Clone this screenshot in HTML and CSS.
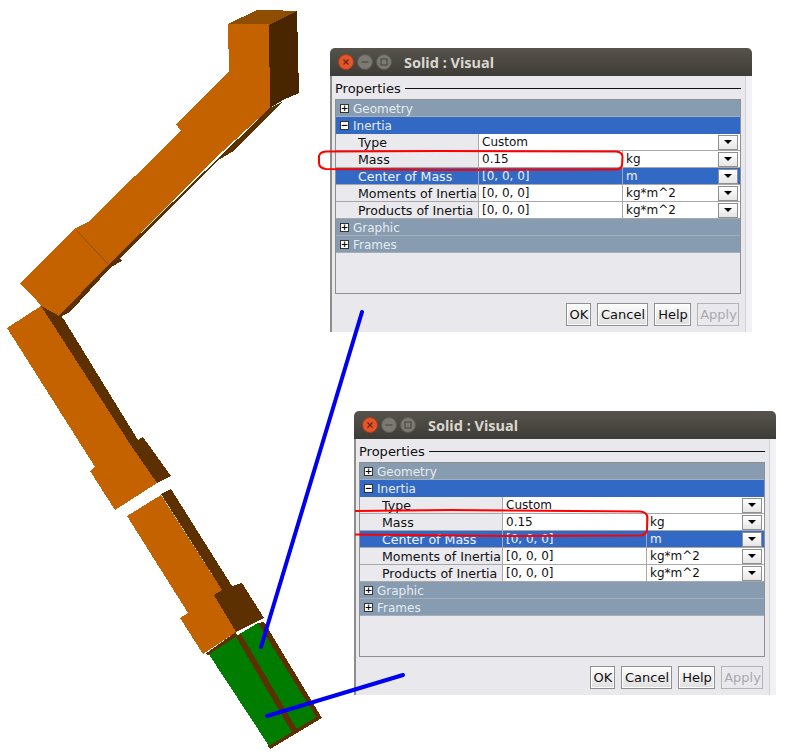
FILE: index.html
```html
<!DOCTYPE html>
<html lang="en">
<head>
  <meta charset="UTF-8">
  <title>Solid : Visual</title>
  <link rel="stylesheet" href="styles.css">
</head>
<body>
<div class="stage">

  <!-- the robot arm -->
  <svg class="canvas" width="789" height="755" viewBox="0 0 789 755">
    <polygon class="top" points="228,24 257,10 268,10 297,11 269,25"/>
    <polygon class="side" points="269,25 297,11 299,93 283,100 270,108"/>
    <polygon class="shade" points="270,108 282,102 232,152 217,161 119,259 123,260 110,268 70,312 55,320 108,265"/>
    <polygon class="shade" points="74,229 88,222 90,224 77,231"/>
    <polygon class="orange" points="228,24 269,24 270,108 211,162 108,265 55,320 20,283 74,229 88,222 181,131 176,124 229,72"/>
    <polyline class="seam" points="77,231 108,264"/>

    <polygon class="shade" points="41,306 63,318 138,440 143,437 171,476 157,483 130,444"/>
    <polygon class="orange" points="7,328 41,306 130,444 157,483 115,510 90,471 95,467"/>

    <polygon class="shade" points="258,623 264,622 322,718 270,749 268,746"/>
    <polygon class="green" points="208,653 258,623 316,717 269,746"/>
    <polygon class="shade" points="236,637 241,634 298,731 293,734"/>

    <polygon class="orange" points="127,516 161,495 222,590 214,595 236,632 203,654 180,618 188,613"/>
    <polygon class="shade" points="161,494 171,489 232,586 242,583 264,618 236,632 214,595 222,590"/>
    <polygon class="shade" points="205,654 236,632 237,636 208,655"/>
  </svg>

  <div class="dialog dialog-a">
    <div class="titlebar">
      <svg class="winbtn" width="16" height="16" viewBox="0 0 16 16"><circle class="btn-close" cx="8" cy="8" r="7.5"/><path class="btn-x" d="M5.5 5.5l5 5M10.5 5.5l-5 5"/></svg>
      <svg class="winbtn" width="16" height="16" viewBox="0 0 16 16"><circle class="btn-off" cx="8" cy="8" r="7.5"/><path class="btn-glyph" d="M4.5 8h7"/></svg>
      <svg class="winbtn" width="16" height="16" viewBox="0 0 16 16"><circle class="btn-off" cx="8" cy="8" r="7.5"/><rect class="btn-glyph" x="5" y="5" width="6" height="6"/></svg>
      <span class="title">Solid : Visual</span>
    </div>
    <div class="body">
      <div class="legend"><span>Properties</span><i></i></div>
      <div class="table">
        <div class="group"><b class="tog">+</b>Geometry</div>
        <div class="group group-open"><b class="tog">−</b>Inertia</div>
        <div class="row"><div class="name">Type</div><div class="val val-wide">Custom</div><div class="drop"><s></s></div></div>
        <div class="row"><div class="name">Mass</div><div class="val">0.15</div><div class="unit">kg</div><div class="drop"><s></s></div></div>
        <div class="row row-sel"><div class="name">Center of Mass</div><div class="val">[0, 0, 0]</div><div class="unit">m</div><div class="drop"><s></s></div></div>
        <div class="row"><div class="name">Moments of Inertia</div><div class="val">[0, 0, 0]</div><div class="unit">kg*m^2</div><div class="drop"><s></s></div></div>
        <div class="row"><div class="name">Products of Inertia</div><div class="val">[0, 0, 0]</div><div class="unit">kg*m^2</div><div class="drop"><s></s></div></div>
        <div class="group"><b class="tog">+</b>Graphic</div>
        <div class="group"><b class="tog">+</b>Frames</div>
      </div>
      <div class="buttons">
        <button class="btn btn-ok">OK</button>
        <button class="btn btn-cancel">Cancel</button>
        <button class="btn btn-help">Help</button>
        <button class="btn btn-apply" disabled>Apply</button>
      </div>
    </div>
  </div>

  <div class="dialog dialog-b">
    <div class="titlebar">
      <svg class="winbtn" width="16" height="16" viewBox="0 0 16 16"><circle class="btn-close" cx="8" cy="8" r="7.5"/><path class="btn-x" d="M5.5 5.5l5 5M10.5 5.5l-5 5"/></svg>
      <svg class="winbtn" width="16" height="16" viewBox="0 0 16 16"><circle class="btn-off" cx="8" cy="8" r="7.5"/><path class="btn-glyph" d="M4.5 8h7"/></svg>
      <svg class="winbtn" width="16" height="16" viewBox="0 0 16 16"><circle class="btn-off" cx="8" cy="8" r="7.5"/><rect class="btn-glyph" x="5" y="5" width="6" height="6"/></svg>
      <span class="title">Solid : Visual</span>
    </div>
    <div class="body">
      <div class="legend"><span>Properties</span><i></i></div>
      <div class="table">
        <div class="group"><b class="tog">+</b>Geometry</div>
        <div class="group group-open"><b class="tog">−</b>Inertia</div>
        <div class="row"><div class="name">Type</div><div class="val val-wide">Custom</div><div class="drop"><s></s></div></div>
        <div class="row"><div class="name">Mass</div><div class="val">0.15</div><div class="unit">kg</div><div class="drop"><s></s></div></div>
        <div class="row row-sel"><div class="name">Center of Mass</div><div class="val">[0, 0, 0]</div><div class="unit">m</div><div class="drop"><s></s></div></div>
        <div class="row"><div class="name">Moments of Inertia</div><div class="val">[0, 0, 0]</div><div class="unit">kg*m^2</div><div class="drop"><s></s></div></div>
        <div class="row"><div class="name">Products of Inertia</div><div class="val">[0, 0, 0]</div><div class="unit">kg*m^2</div><div class="drop"><s></s></div></div>
        <div class="group"><b class="tog">+</b>Graphic</div>
        <div class="group"><b class="tog">+</b>Frames</div>
      </div>
      <div class="buttons">
        <button class="btn btn-ok">OK</button>
        <button class="btn btn-cancel">Cancel</button>
        <button class="btn btn-help">Help</button>
        <button class="btn btn-apply" disabled>Apply</button>
      </div>
    </div>
  </div>

  <!-- hand drawn marks over the screenshots -->
  <svg class="canvas" width="789" height="755" viewBox="0 0 789 755">
    <path class="red" d="M326 151.5L440 151L616 151.5Q622.500 152 622.500 157L622 165Q621 169.500 615 169.500L450 170L326 169Q319 168 319 163L319 156Q320 152 326 151.500Z"/>
    <path class="red" d="M355 511L450 510L640 511.500Q647.500 512 647.500 518L647 530Q646 535 640 535.500L520 536L355 534.500"/>
    <line class="blue" x1="362" y1="312" x2="261" y2="647"/>
    <line class="blue" x1="403" y1="675" x2="267" y2="716"/>
  </svg>

</div>
</body>
</html>
```

FILE: styles.css
```css
body {
  margin: 0;
  background: #fff;
  font-family: "DejaVu Sans", sans-serif;
  font-size: 13px;
  color: #111;
}

.stage {
  position: relative;
  width: 789px;
  height: 755px;
  overflow: hidden;
}

.canvas {
  position: absolute;
  left: 0;
  top: 0;
}

/* arm */
.orange { fill: #c46200; shape-rendering: crispEdges; }
.shade { fill: #5c3000; shape-rendering: crispEdges; }
.side { fill: #4a2600; shape-rendering: crispEdges; }
.top { fill: #8f4d00; shape-rendering: crispEdges; }
.green { fill: #007c00; shape-rendering: crispEdges; }
.seam { fill: none; stroke: #8f4d00; stroke-width: 1; }

/* marks */
.red { fill: none; stroke: #f00; stroke-width: 2; }
.blue { stroke: #0000f0; stroke-width: 4; stroke-linecap: round; }

/* dialogs */
.dialog {
  position: absolute;
  width: 422px;
  height: 284px;
  display: flex;
  flex-direction: column;
}
.dialog-a { left: 330px; top: 48px; }
.dialog-b { left: 354px; top: 411px; }

.titlebar {
  height: 28px;
  flex: none;
  display: flex;
  align-items: center;
  gap: 3px;
  padding-left: 8px;
  background: linear-gradient(#57534c, #3e3c37);
  border-radius: 5px 5px 0 0;
}
.winbtn { flex: none; }
.btn-close { fill: #e2562a; stroke: #a93d18; stroke-width: 1; }
.btn-x { fill: none; stroke: #6b2510; stroke-width: 1.2; }
.btn-off { fill: #7b7972; stroke: #5b5a54; stroke-width: 1; }
.btn-glyph { fill: none; stroke: #4d4c46; stroke-width: 1.2; }
.title {
  margin-left: 9px;
  font-family: "Noto Sans", sans-serif;
  font-weight: 700;
  font-size: 14.5px;
  color: #d8d6cf;
}

.body {
  flex: 1;
  display: flex;
  flex-direction: column;
  padding: 0 5px 0 3px;
  background: #e9e8ed;
  border-left: 2px solid #8e8e8e;
  border-right: 6px solid #f1f0f5;
  box-shadow: inset -1px 0 0 #d2d2d6;
}

.legend {
  height: 23px;
  flex: none;
  display: flex;
  align-items: center;
  gap: 4px;
  margin-top: 1px;
}
.legend i {
  flex: 1;
  height: 1px;
  margin-top: -1px;
  background: #111;
}

.table {
  height: 195px;
  flex: none;
  margin-top: -1px;
  border: 1px solid #8f8f8f;
  box-sizing: border-box;
}

.group {
  height: 17px;
  box-sizing: border-box;
  display: flex;
  align-items: center;
  padding: 1px 0 0 4px;
  background: #879cb1;
  border-bottom: 1px solid #a4afba;
  color: #e6ebf0;
  font-size: 12px;
}
.group-open {
  background: #3269c4;
  border-bottom-color: #3269c4;
}
.tog {
  width: 9px;
  height: 9px;
  box-sizing: border-box;
  margin: -1px 4px 0 0;
  display: flex;
  align-items: center;
  justify-content: center;
  background: #fff;
  border: 1px solid #333;
  color: #000;
  font-size: 9px;
  line-height: 7px;
  font-weight: 700;
}

.row {
  height: 17px;
  box-sizing: border-box;
  display: flex;
  align-items: center;
  background: #fff;
  border-bottom: 1px solid #a8a8a8;
}
.row > div { height: 16px; line-height: 17px; box-sizing: border-box; }
.row > .name {
  width: 143px;
  flex: none;
  padding-left: 22px;
  background: #e9e9ee;
  border-right: 1px solid #a8a8a8;
  white-space: nowrap;
  font-size: 12.6px;
}
.val {
  width: 144px;
  flex: none;
  padding-left: 3px;
  border-right: 1px solid #a8a8a8;
  font-size: 12px;
}
.val-wide { width: 239px; border-right: 0; }
.unit {
  width: 95px;
  flex: none;
  padding-left: 3px;
  font-size: 12px;
}
.row > .drop {
  width: 20px;
  height: 15px;
  flex: none;
  display: flex;
  align-items: center;
  justify-content: center;
  background: linear-gradient(#fff, #e6e6e6);
  border: 1px solid #8f8f8f;
}
.drop s {
  width: 0;
  height: 0;
  border-left: 4px solid transparent;
  border-right: 4px solid transparent;
  border-top: 4px solid #000;
}

.row-sel { background: #3269c4; color: #eef2fa; }
.row-sel > .name { background: #3269c4; }

.buttons {
  display: flex;
  justify-content: flex-end;
  gap: 6px;
  margin-top: 9px;
  padding-right: 2px;
}
.btn {
  height: 23px;
  padding: 0 0 0 1px;
  box-sizing: border-box;
  font-family: "DejaVu Sans", sans-serif;
  font-size: 13px;
  color: #111;
  background: linear-gradient(#fdfdfd, #dedee0);
  border: 1px solid #8f8f8f;
  box-shadow: inset 0 0 0 1px #fff;
}
.btn-ok { width: 25px; }
.btn-cancel { width: 51px; }
.btn-help { width: 37px; }
.btn-apply {
  width: 42px;
  color: #a9a9ad;
  background: #e9e8ed;
  border-color: #b4b4b6;
  box-shadow: none;
}
```
